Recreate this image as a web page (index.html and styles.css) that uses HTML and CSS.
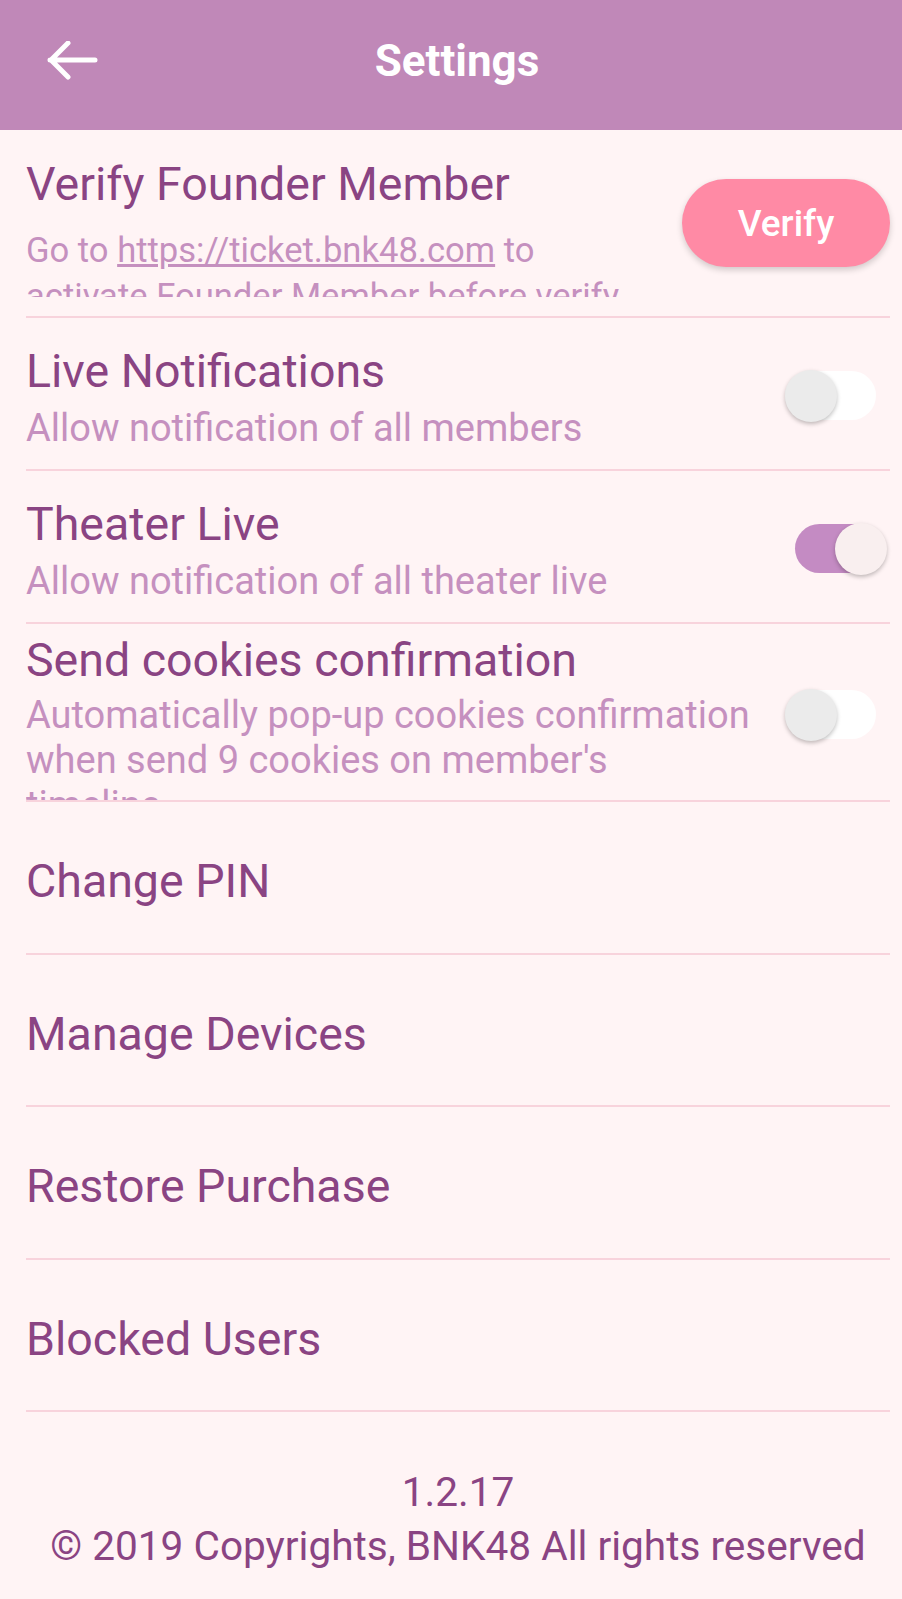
FILE: index.html
```html
<!DOCTYPE html>
<html lang="en">
<head>
  <meta charset="UTF-8">
  <meta name="viewport" content="width=device-width, initial-scale=1.0">
  <title>Settings</title>
  <link rel="stylesheet" href="styles.css">
</head>
<body>
  <header class="topbar">
    <button class="back" title="Back">
      <svg width="52" height="40" viewBox="0 0 52 40">
        <path d="M4 19 H49 M22 2 L5 19 L22 36" fill="none" stroke="#fff" stroke-width="5" stroke-linecap="round" stroke-linejoin="round"/>
      </svg>
    </button>
    <h1 class="title">Settings</h1>
  </header>

  <ul class="settings">
    <li class="item item-verify">
      <div class="text">
        <div class="name">Verify Founder Member</div>
        <div class="desc">Go to <a href="#">https://ticket.bnk48.com</a> to<br>activate Founder Member before verify</div>
      </div>
      <button class="verify-btn">Verify</button>
    </li>
    <li class="item item-switch">
      <div class="text">
        <div class="name">Live Notifications</div>
        <div class="desc">Allow notification of all members</div>
      </div>
      <span class="switch"><span class="knob"></span></span>
    </li>
    <li class="item item-switch">
      <div class="text">
        <div class="name">Theater Live</div>
        <div class="desc">Allow notification of all theater live</div>
      </div>
      <span class="switch on"><span class="knob"></span></span>
    </li>
    <li class="item item-cookies">
      <div class="text">
        <div class="name">Send cookies confirmation</div>
        <div class="desc">Automatically pop-up cookies confirmation<br>when send 9 cookies on member's<br>timeline</div>
      </div>
      <span class="switch"><span class="knob"></span></span>
    </li>
    <li class="item item-link"><div class="text"><div class="name">Change PIN</div></div></li>
    <li class="item item-link"><div class="text"><div class="name">Manage Devices</div></div></li>
    <li class="item item-link"><div class="text"><div class="name">Restore Purchase</div></div></li>
    <li class="item item-link"><div class="text"><div class="name">Blocked Users</div></div></li>
  </ul>

  <footer class="footer">
    <p>1.2.17</p>
    <p>© 2019 Copyrights, BNK48 All rights reserved</p>
  </footer>
</body>
</html>
```

FILE: styles.css
```css
* {
  margin: 0;
  padding: 0;
  box-sizing: border-box;
}

body {
  font-family: Roboto, "Noto Sans", sans-serif;
  background-color: #fff4f5;
  color: #8a4483;
}

.topbar {
  display: flex;
  align-items: center;
  height: 130px;
  padding: 0 0 8px 46px;
  background-color: #c088b8;
}

.back {
  display: flex;
  width: 52px;
  height: 40px;
  border: none;
  background: none;
  cursor: pointer;
}

.title {
  flex: 1;
  margin-right: 86px;
  text-align: center;
  font-size: 44px;
  font-weight: 700;
  color: #fff;
}

.settings {
  list-style: none;
}

.item {
  display: flex;
  align-items: center;
  justify-content: space-between;
  margin: 0 12px 0 26px;
  border-bottom: 2px solid #f8d3dc;
}

.text {
  flex: 1;
  align-self: stretch;
  overflow: hidden;
}

.name {
  line-height: 54px;
  font-size: 46.5px;
}

.desc {
  margin-top: 7px;
  line-height: 46px;
  font-size: 38px;
  color: #c590bf;
}

.desc a {
  color: #c590bf;
}

.item-verify {
  height: 188px;
}

.item-verify .text {
  padding-top: 27px;
}

.item-verify .desc {
  margin-top: 16px;
  height: 70px;
  overflow: hidden;
  font-size: 34.6px;
}

.item-switch {
  height: 153px;
}

.item-switch .text {
  padding-top: 26px;
}

.item-cookies {
  height: 178px;
}

.item-cookies .text {
  padding-top: 9px;
}

.item-cookies .desc {
  margin-top: 6px;
  line-height: 45px;
}

.item-link {
  height: 152.5px;
}

.item-link .text {
  padding-top: 52px;
}

.verify-btn {
  width: 208px;
  height: 88px;
  border: none;
  border-radius: 44px;
  background-color: #ff8aa5;
  box-shadow: 0 3px 6px rgba(0, 0, 0, .18);
  font-family: Roboto, sans-serif;
  font-size: 37px;
  font-weight: 500;
  color: #fff;
  cursor: pointer;
}

.switch {
  position: relative;
  flex-shrink: 0;
  width: 91px;
  height: 49px;
  margin: 4px 14px 0 0;
  border-radius: 25px;
  background-color: #fff;
}

.knob {
  position: absolute;
  top: -1px;
  left: 0;
  width: 52px;
  height: 52px;
  border-radius: 50%;
  background-color: #ebebeb;
  box-shadow: 0 2px 4px rgba(0, 0, 0, .25);
}

.switch.on {
  width: 86px;
  margin-right: 9px;
  background-color: #c48bc3;
}

.switch.on .knob {
  left: auto;
  right: -6px;
  background-color: #f9efef;
}

.footer {
  margin: 0 12px 0 26px;
  padding-top: 53px;
  text-align: center;
  line-height: 54px;
  font-size: 40.6px;
}
```
